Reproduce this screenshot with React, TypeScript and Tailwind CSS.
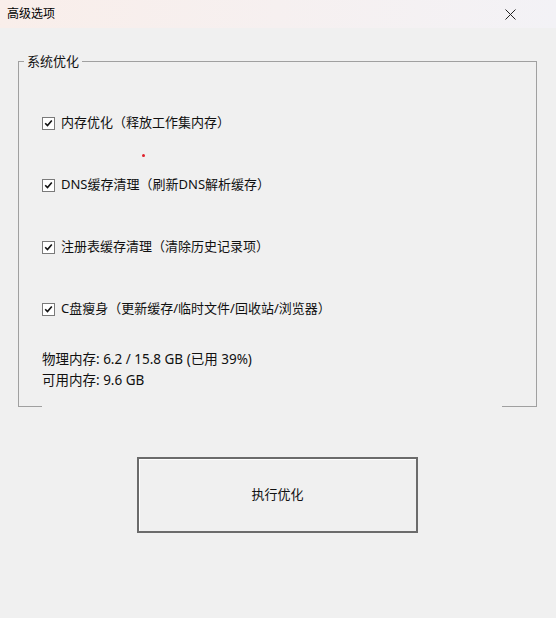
const font = "font-['Noto_Sans','Noto_Sans_CJK_SC',sans-serif]";

function Check({ label }: { label: string }) {
  return (
    <div className="flex h-5 items-center gap-[6px]">
      <span className="flex h-[13px] w-[13px] items-center justify-center border border-[#7a7a7a] bg-white">
        <svg width="9" height="9" viewBox="0 0 9 9">
          <path d="M1.2 4.2 L3.5 6.6 L7.8 1.6" fill="none" stroke="#111" strokeWidth="1.6" />
        </svg>
      </span>
      <span className="text-[13px] text-[#111]">{label}</span>
    </div>
  );
}

export default function App() {
  return (
    <div className={`h-[618px] w-[556px] bg-[#f0f0f0] ${font}`}>
      <div className="flex h-[28px] items-center justify-between bg-gradient-to-r from-[#f9eeea] to-[#f3f2f6] pl-[7px] pr-[40px]">
        <span className="text-[12px] text-black">高级选项</span>
        <svg width="11" height="11" viewBox="0 0 11 11">
          <path d="M0.5 0.5 L10.5 10.5 M10.5 0.5 L0.5 10.5" stroke="#222" strokeWidth="1" />
        </svg>
      </div>

      <div className="pl-[18px] pt-[25px]">
        <div className="relative w-[519px]">
          <fieldset className="border border-b-0 border-[#a0a0a0]">
            <legend className="ml-[5px] px-[3px] text-[13px] leading-[16px] text-[#111]">系统优化</legend>
            <div className="pl-[23px] pr-4 pb-[15px]">
              <div className="flex flex-col gap-[42px] pt-[44px]">
                <Check label="内存优化（释放工作集内存）" />
                <Check label="DNS缓存清理（刷新DNS解析缓存）" />
                <Check label="注册表缓存清理（清除历史记录项）" />
                <Check label="C盘瘦身（更新缓存/临时文件/回收站/浏览器）" />
              </div>
              <div className="mt-[30px] flex flex-col text-[13.5px] leading-[21px] text-[#111]">
                <span>物理内存: 6.2 / 15.8 GB (已用 39%)</span>
                <span>可用内存: 9.6 GB</span>
              </div>
            </div>
          </fieldset>
          <div className="flex justify-between">
            <div className="h-px w-[24px] bg-[#a0a0a0]" />
            <div className="h-px w-[35px] bg-[#a0a0a0]" />
          </div>
          <span className="absolute left-[124px] top-[101px] h-[3px] w-[3px] rounded-full bg-[#e0202a]" />
        </div>
      </div>

      <div className="pl-[137px] pt-[50px]">
        <button className="flex h-[76px] w-[281px] items-center justify-center border-2 border-[#6b6b6b] bg-[#f0f0f0] shadow-[inset_1px_1px_0_#ffffff] text-[13px] text-[#111]">
          执行优化
        </button>
      </div>
    </div>
  );
}
